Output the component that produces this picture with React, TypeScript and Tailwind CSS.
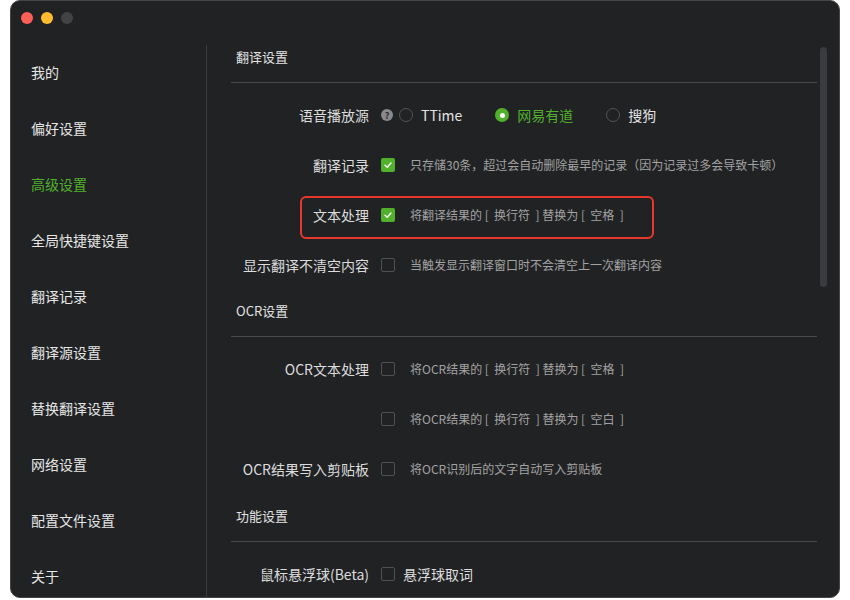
import { ReactNode } from 'react'

const NAV = ['我的', '偏好设置', '高级设置', '全局快捷键设置', '翻译记录', '翻译源设置', '替换翻译设置', '网络设置', '配置文件设置', '关于']

const FONT = { fontFamily: '"Noto Sans CJK SC", "Noto Sans", sans-serif' }

function Checkbox({ checked }: { checked?: boolean }) {
  if (checked) {
    return (
      <span className="flex h-[14px] w-[14px] shrink-0 items-center justify-center rounded-[2px] bg-[#52b12c]">
        <svg width="10" height="10" viewBox="0 0 10 10" fill="none">
          <path d="M2 5.2 L4.2 7.2 L8 3" stroke="white" strokeWidth="1.4" strokeLinecap="round" strokeLinejoin="round" />
        </svg>
      </span>
    )
  }
  return <span className="block h-[14px] w-[14px] shrink-0 rounded-[2px] border border-[#505154]" />
}

function Row({ label, children }: { label?: string; children: ReactNode }) {
  return (
    <div className="relative flex h-[50px] items-center">
      <div className="w-[138px] shrink-0 text-right text-[14px] text-[#dcdcdc]">{label}</div>
      <div className="ml-[12px] flex items-center">{children}</div>
    </div>
  )
}

function CheckRow({ label, checked, desc }: { label?: string; checked?: boolean; desc: string }) {
  return (
    <Row label={label}>
      <Checkbox checked={checked} />
      <span className="ml-[15px] whitespace-pre text-[12px] text-[#a3a3a3]">{desc}</span>
    </Row>
  )
}

function Section({ title, children, gapTop }: { title: string; children: ReactNode; gapTop: string }) {
  return (
    <div className={gapTop}>
      <div className="h-[38px] border-b border-[#48494c]">
        <div className="pl-[5px] text-[13px] leading-[24px] text-[#e2e2e2]">{title}</div>
      </div>
      <div className="pt-[7px]">{children}</div>
    </div>
  )
}

function Radio({ on, text }: { on?: boolean; text: string }) {
  return (
    <div className="flex items-center">
      {on ? (
        <span className="flex h-[14px] w-[14px] items-center justify-center rounded-full bg-[#52b12c]">
          <span className="h-[5px] w-[5px] rounded-full bg-white" />
        </span>
      ) : (
        <span className="h-[14px] w-[14px] rounded-full border border-[#54555a]" />
      )}
      <span className={`ml-[8px] text-[14px] ${on ? 'text-[#52b12c]' : 'text-[#e2e2e2]'}`}>{text}</span>
    </div>
  )
}

export default function App() {
  return (
    <div className="h-[600px] w-[850px] bg-white pl-[10px]" style={FONT}>
      <div className="flex h-[598px] w-[830px] flex-col overflow-hidden rounded-[10px] border border-[#454548] bg-[#212224]">
        {/* title bar */}
        <div className="flex h-[44px] shrink-0 items-start gap-[8px] pl-[10px] pt-[11px]">
          <span className="h-[12px] w-[12px] rounded-full bg-[#fe5f57]" />
          <span className="h-[12px] w-[12px] rounded-full bg-[#febc2e]" />
          <span className="h-[12px] w-[12px] rounded-full bg-[#434346]" />
        </div>

        <div className="flex min-h-0 flex-1">
          {/* sidebar */}
          <div className="w-[196px] shrink-0 border-r border-[#3b3c3f]">
            {NAV.map((n) => (
              <div
                key={n}
                className={`flex h-[56px] items-center pb-[2px] pl-[20px] text-[14px] ${n === '高级设置' ? 'text-[#52b12c]' : 'text-[#e6e6e6]'}`}
              >
                {n}
              </div>
            ))}
          </div>

          {/* content */}
          <div className="relative flex-1 pl-[24px] pr-[22px]">
            <Section title="翻译设置" gapTop="">
              <Row label="语音播放源">
                <span className="flex h-[12px] w-[12px] items-center justify-center rounded-full bg-[#8a8a8c] text-[9px] font-bold leading-none text-[#2a2a2c]">
                  ?
                </span>
                <div className="ml-[6px] flex items-center gap-[33px]">
                  <Radio text="TTime" />
                  <Radio on text="网易有道" />
                  <Radio text="搜狗" />
                </div>
              </Row>
              <CheckRow label="翻译记录" checked desc="只存储30条，超过会自动删除最早的记录（因为记录过多会导致卡顿）" />
              <div className="relative">
                <CheckRow label="文本处理" checked desc="将翻译结果的 [  换行符  ] 替换为 [  空格  ]" />
                <div className="absolute left-[69px] top-[6px] h-[43px] w-[354px] rounded-[6px] border-2 border-[#e8382c]" />
              </div>
              <CheckRow label="显示翻译不清空内容" desc="当触发显示翻译窗口时不会清空上一次翻译内容" />
            </Section>

            <Section title="OCR设置" gapTop="mt-[9px]">
              <CheckRow label="OCR文本处理" desc="将OCR结果的 [  换行符  ] 替换为 [  空格  ]" />
              <CheckRow desc="将OCR结果的 [  换行符  ] 替换为 [  空白  ]" />
              <CheckRow label="OCR结果写入剪贴板" desc="将OCR识别后的文字自动写入剪贴板" />
            </Section>

            <Section title="功能设置" gapTop="mt-[10px]">
              <Row label="鼠标悬浮球(Beta)">
                <Checkbox />
                <span className="ml-[8px] text-[14px] text-[#dcdcdc]">悬浮球取词</span>
              </Row>
            </Section>

            {/* scrollbar */}
            <div className="absolute right-[12px] top-[2px] h-[240px] w-[7px] rounded-full bg-[#3a3b3e]" />
          </div>
        </div>
      </div>
    </div>
  )
}
